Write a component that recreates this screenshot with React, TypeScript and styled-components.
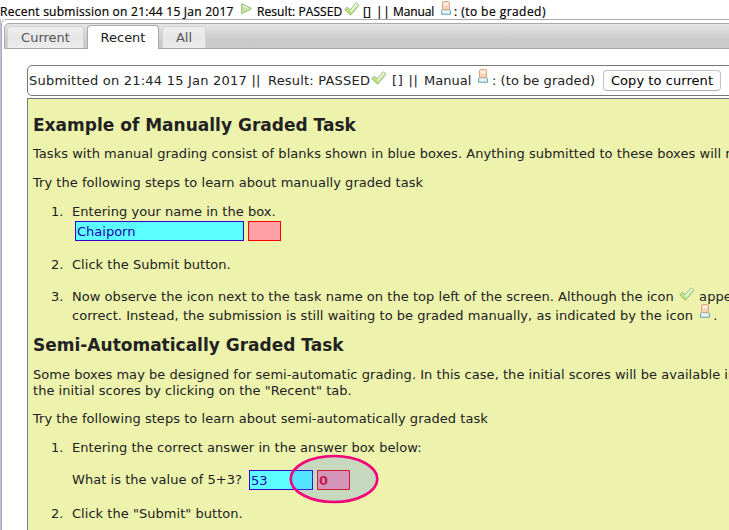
import React from 'react';
import styled, { createGlobalStyle } from 'styled-components';

const Global = createGlobalStyle`
  * { box-sizing: border-box; }
  html, body { margin: 0; height: 100%; overflow: hidden; background: #fff; }
`;

const Page = styled.div`
  width: 729px;
  height: 530px;
  overflow: hidden;
  background: #fff;
  color: #222;
  font: 13px/16px "DejaVu Sans", sans-serif;
  white-space: nowrap;
`;

const StatusLine = styled.div`
  display: flex;
  height: 19px;
  padding-top: 4px;
  color: #000;
  font: 12px/16px "Open Sans", "Noto Sans", sans-serif;
  -webkit-text-stroke: 0.2px #000;
`;

const Segment = styled.span<{ $w: number; $ls?: number; $lh?: number }>`
  flex: none;
  width: ${p => p.$w}px;
  letter-spacing: ${p => p.$ls ?? 0}px;
  line-height: ${p => p.$lh ?? 16}px;
`;

const FrameEdge = styled.div`
  width: 750px;
  border-left: 1px solid #b5c1ec;
`;

const Panel = styled.div`
  width: 750px;
  height: 530px;
  border: 1px solid #aaa;
  border-radius: 5px;
  padding: 3px 0 0 2px;
`;

const TabBar = styled.div`
  display: flex;
  align-items: flex-end;
  height: 26px;
  border: 1px solid #aaa;
  border-radius: 5px 0 0 0;
  padding-left: 2px;
  background: linear-gradient(#e5e5e5, #cbcbcb 65%, #c9c9c9);
`;

const Tab = styled.div<{ $w: number; $active?: boolean; $gap: number }>`
  flex: none;
  width: ${p => p.$w}px;
  height: ${p => (p.$active ? 24 : 22)}px;
  margin: 0 ${p => p.$gap}px ${p => (p.$active ? -1 : 0)}px 0;
  border: 1px solid ${p => (p.$active ? '#aaa' : '#d3d3d3')};
  border-bottom: 0;
  border-radius: 4px 4px 0 0;
  background: ${p => (p.$active ? '#fff' : 'linear-gradient(#eee, #e6e6e6 50%, #ececec)')};
  color: ${p => (p.$active ? '#212121' : '#555')};
  text-align: center;
  line-height: ${p => (p.$active ? 23 : 22)}px;
`;

const Content = styled.div`
  padding: 16px 0 0 23px;
`;

const InfoBar = styled.div`
  display: flex;
  align-items: center;
  height: 31px;
  border: 1px solid #777;
  border-radius: 5px;
  padding-left: 1px;
`;

const CopyButton = styled.button`
  flex: none;
  width: 118px;
  height: 21px;
  padding: 0;
  border: 1px solid #c3c3c3;
  border-bottom-color: #b0b0b0;
  border-radius: 4px;
  background: #fff;
  color: #000;
  font: 13px/18px "DejaVu Sans", sans-serif;
  letter-spacing: 0.06px;
`;

const Sheet = styled.div`
  height: 450px;
  margin-top: 2px;
  border: 1px solid #777;
  padding: 15px 0 0 5px;
  background: #edf3ad;
`;

const Heading = styled.h2<{ $top?: number }>`
  margin: ${p => p.$top ?? 0}px 0 0;
  font: bold 17px/22px "DejaVu Sans", sans-serif;
`;

const Line = styled.div<{ $top?: number }>`
  height: 16px;
  margin-top: ${p => p.$top ?? 0}px;
  letter-spacing: 0.038px;
`;

const Step = styled.div<{ $top: number }>`
  display: grid;
  grid-template-columns: 21px 1fr;
  margin: ${p => p.$top}px 0 0 18px;
`;

const Fields = styled.div<{ $top?: number; $left?: number }>`
  display: flex;
  align-items: center;
  gap: 4px;
  height: 20px;
  margin: ${p => p.$top ?? 0}px 0 0 ${p => p.$left ?? 0}px;
`;

const Blank = styled.div<{ $w: number; $score?: boolean }>`
  flex: none;
  width: ${p => p.$w}px;
  height: 20px;
  padding-left: 1px;
  border: 1px solid ${p => (p.$score ? '#f00' : '#30c')};
  background: ${p => (p.$score ? '#ff9fa6' : '#5cffff')};
  color: ${p => (p.$score ? '#f00020' : '#1c00b0')};
  font-weight: ${p => (p.$score ? 'bold' : 'normal')};
  line-height: 19px;
`;

const ScoreWrap = styled.div`
  position: relative;
`;

const Highlight = styled.svg`
  position: absolute;
  left: -28px;
  top: -16px;
  display: block;
`;

const Icon = styled.svg<{ $dy?: number; $ml?: number; $mr?: number }>`
  flex: none;
  display: inline-block;
  margin: ${p => p.$dy ?? 0}px ${p => p.$mr ?? 0}px 0 ${p => p.$ml ?? 0}px;
  vertical-align: top;
`;

type IconProps = { dy?: number; ml?: number; mr?: number };

const Check = ({ dy, ml, mr }: IconProps) => (
  <Icon $dy={dy} $ml={ml} $mr={mr} width="16" height="14" viewBox="0 0 16 14">
    <path d="M.7 7.6 3.3 5.2l2.8 2.7L12.4.7l2.5 2.5-8.3 10z" fill="#c9eb98" stroke="#93b383" strokeWidth="1" />
    <path d="m7 9 5.5-6.6 1 1" fill="none" stroke="#eff9e2" strokeWidth="1.4" />
    <path d="m2.4 7.4 4 4.1" stroke="#b1df65" strokeWidth="1.3" />
  </Icon>
);

const Person = ({ dy, ml, mr }: IconProps) => (
  <Icon $dy={dy} $ml={ml} $mr={mr} width="10" height="14" viewBox="0 0 10 14">
    <path d="M.5 13.3v-3.6L1.8 8h6.4l1.3 1.7v3.6z" fill="#cee8ea" stroke="#70a9ac" />
    <path d="M2 11h6" stroke="#fff" />
    <rect x="1.5" y=".5" width="7" height="8" rx="1.2" fill="#fbd3b7" stroke="#dfa580" />
    <path d="M2.5 3h5" stroke="#ffeee2" strokeWidth="3" />
  </Icon>
);

const Play = ({ dy, ml, mr }: IconProps) => (
  <Icon $dy={dy} $ml={ml} $mr={mr} width="12" height="12" viewBox="0 0 12 12">
    <path d="M.7.8 10 5.2v1L.7 10.6z" fill="#c5e79c" stroke="#98bb83" strokeLinejoin="round" />
    <path d="M1.9 2.7 7.5 5.4" stroke="#effbdc" />
  </Icon>
);

export default function App() {
  return (
    <Page>
      <Global />
      <StatusLine>
        <Segment $w={241} $ls={0.25}>Recent submission on 21:44 15 Jan 2017</Segment>
        <Play dy={-1} mr={4} />
        <Segment $w={87} $ls={0.08}>Result: PASSED</Segment>
        <Check dy={-2} mr={3} />
        <Segment $w={13}>[]</Segment>
        <Segment $w={17} $ls={0.6}>||</Segment>
        <Segment $w={48} $ls={-0.1}>Manual</Segment>
        <Person dy={-3} mr={3} />
        <Segment $w={110} $ls={0.45}>: (to be graded)</Segment>
      </StatusLine>
      <FrameEdge>
        <Panel>
          <TabBar>
            <Tab $w={77} $gap={3}>Current</Tab>
            <Tab $w={72} $gap={3} $active>Recent</Tab>
            <Tab $w={44} $gap={0}>All</Tab>
          </TabBar>
          <Content>
            <InfoBar>
              <Segment $w={239} $ls={0.22}>Submitted on 21:44 15 Jan 2017 ||</Segment>
              <Segment $w={103} $ls={0.2}>Result: PASSED</Segment>
              <Check dy={-5} mr={5} />
              <Segment $w={32} $ls={0.7}>[] ||</Segment>
              <Segment $w={54}>Manual</Segment>
              <Person dy={-9} mr={4} />
              <Segment $w={111} $ls={0.05}>: (to be graded)</Segment>
              <CopyButton>Copy to current</CopyButton>
            </InfoBar>
            <Sheet>
              <Heading>Example of Manually Graded Task</Heading>
              <Line $top={10}>Tasks with manual grading consist of blanks shown in blue boxes. Anything submitted to these boxes will not be graded</Line>
              <Line $top={13}>Try the following steps to learn about manually graded task</Line>
              <Step $top={13}>
                <span>1.</span>
                <div>
                  <Line>Entering your name in the box.</Line>
                  <Fields $top={1} $left={3}>
                    <Blank $w={169}>Chaiporn</Blank>
                    <Blank $w={33} $score />
                  </Fields>
                </div>
              </Step>
              <Step $top={16}>
                <span>2.</span>
                <Line>Click the Submit button.</Line>
              </Step>
              <Step $top={16}>
                <span>3.</span>
                <div>
                  <Line>Now observe the icon next to the task name on the top left of the screen. Although the icon <Check dy={-2} ml={1} /> appears, it does not mean</Line>
                  <Line $top={3}>correct. Instead, the submission is still waiting to be graded manually, as indicated by the icon <Person dy={-4} ml={3} mr={3} />.</Line>
                </div>
              </Step>
              <Heading $top={10}>Semi-Automatically Graded Task</Heading>
              <Line $top={11}>Some boxes may be designed for semi-automatic grading. In this case, the initial scores will be available immediately</Line>
              <Line>the initial scores by clicking on the "Recent" tab.</Line>
              <Line $top={12}>Try the following steps to learn about semi-automatically graded task</Line>
              <Step $top={13}>
                <span>1.</span>
                <div>
                  <Line>Entering the correct answer in the answer box below:</Line>
                  <Fields $top={14}>
                    <Segment $w={173} $ls={0.04} $lh={18}>What is the value of 5+3?</Segment>
                    <Blank $w={64}>53</Blank>
                    <ScoreWrap>
                      <Blank $w={33} $score>0</Blank>
                      <Highlight width="90" height="50" viewBox="0 0 90 50">
                        <ellipse cx="45" cy="25" rx="43.3" ry="23" fill="#3377ff" fillOpacity=".21" stroke="#f5007b" strokeWidth="2.6" />
                      </Highlight>
                    </ScoreWrap>
                  </Fields>
                </div>
              </Step>
              <Step $top={16}>
                <span>2.</span>
                <Line>Click the "Submit" button.</Line>
              </Step>
            </Sheet>
          </Content>
        </Panel>
      </FrameEdge>
    </Page>
  );
}
